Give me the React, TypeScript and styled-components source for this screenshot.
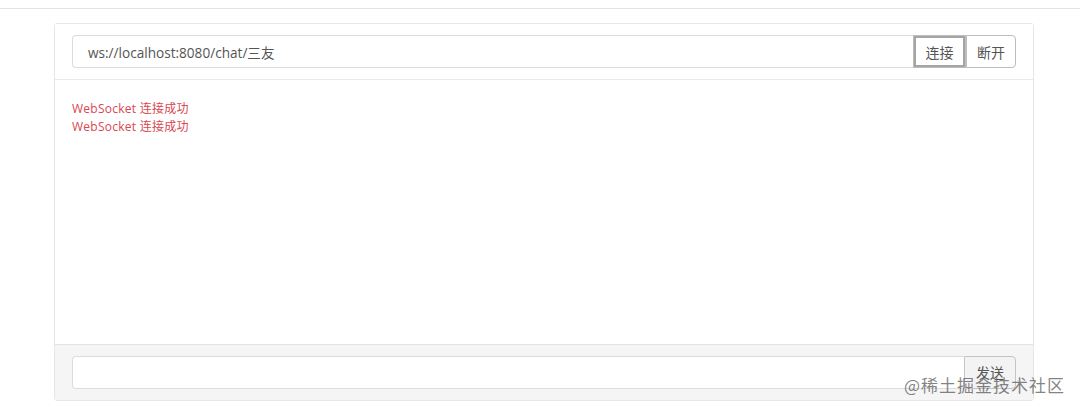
import React, { FC } from 'react';
import styled, { createGlobalStyle } from 'styled-components';

const GlobalStyle = createGlobalStyle`
  html, body {
    margin: 0;
    padding: 0;
    background: #fff;
    font-family: 'Open Sans', 'Noto Sans CJK SC', sans-serif;
  }
`;

const Styled = {
  Page: styled.div`
    position: relative;
    width: 1080px;
    height: 411px;
    overflow: hidden;
  `,
  TopBar: styled.div`
    height: 8px;
    border-bottom: 1px solid #e3e3e3;
  `,
  Panel: styled.div`
    margin: 14px 0 0 54px;
    width: 978px;
    border: 1px solid #e6e6e6;
    border-radius: 3px;
    display: flex;
    flex-direction: column;
  `,
  Bar: styled.div<{ $footer?: boolean }>`
    display: flex;
    align-items: stretch;
    height: 33px;
    padding: 11px 17px;
    background: ${(p) => (p.$footer ? '#f5f5f5' : '#fff')};
    ${(p) => (p.$footer ? 'border-top: 1px solid #e3e3e3;' : 'border-bottom: 1px solid #ebebeb;')}
  `,
  Input: styled.div`
    flex: 1;
    display: flex;
    align-items: center;
    padding: 0 15px;
    background: #fff;
    border: 1px solid #dcdcdc;
    border-right: none;
    border-radius: 4px 0 0 4px;
    font-size: 13.6px;
    color: #555;
  `,
  Button: styled.button<{ $focus?: boolean; $last?: boolean; $width: number }>`
    width: ${(p) => p.$width}px;
    padding: 0;
    background: #fff;
    border: 1px solid #bdbdbd;
    border-radius: ${(p) => (p.$last ? '0 4px 4px 0' : '0')};
    box-shadow: ${(p) => (p.$focus ? 'inset 0 0 0 2px #a5a5a5' : 'none')};
    font-family: 'Noto Sans CJK SC', sans-serif;
    font-size: 14px;
    color: #555;
    cursor: pointer;
  `,
  Send: styled.button`
    width: 52px;
    padding: 0 0 2px;
    background: #f3f3f3;
    border: 1px solid #c4c4c4;
    border-radius: 0 4px 4px 0;
    font-family: 'Noto Sans CJK SC', sans-serif;
    font-size: 14px;
    color: #555;
  `,
  Body: styled.div`
    height: 240px;
    padding: 20px 17px 4px;
  `,
  Message: styled.div`
    font-size: 12px;
    letter-spacing: 0.25px;
    line-height: 18px;
    color: #d9484f;
  `,
  Watermark: styled.div`
    position: absolute;
    left: 904px;
    top: 372px;
    font-family: 'Noto Sans CJK SC', sans-serif;
    font-size: 17px;
    letter-spacing: 1px;
    color: rgba(90, 90, 90, 0.75);
    pointer-events: none;
  `,
};

const messages = ['WebSocket 连接成功', 'WebSocket 连接成功'];

const App: FC = () => {
  return (
    <Styled.Page>
      <GlobalStyle />
      <Styled.TopBar />
      <Styled.Panel>
        <Styled.Bar>
          <Styled.Input>ws://localhost:8080/chat/三友</Styled.Input>
          <Styled.Button $focus $width={53}>
            连接
          </Styled.Button>
          <Styled.Button $last $width={50}>
            断开
          </Styled.Button>
        </Styled.Bar>
        <Styled.Body>
          {messages.map((m, i) => (
            <Styled.Message key={i}>{m}</Styled.Message>
          ))}
        </Styled.Body>
        <Styled.Bar $footer>
          <Styled.Input />
          <Styled.Send>发送</Styled.Send>
        </Styled.Bar>
      </Styled.Panel>
      <Styled.Watermark>@稀土掘金技术社区</Styled.Watermark>
    </Styled.Page>
  );
};

export default App;
